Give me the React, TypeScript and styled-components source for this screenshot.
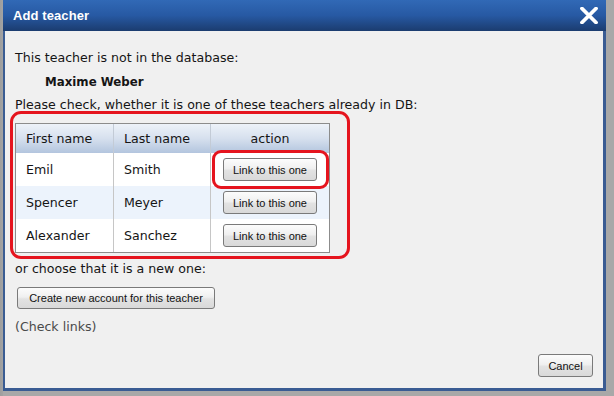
import React from 'react';
import styled, { createGlobalStyle } from 'styled-components';

const GlobalStyle = createGlobalStyle`
html, body {
  margin: 0;
  padding: 0;
  background: #a8a8a8;
  overflow: hidden;
}
body {
  font-family: "DejaVu Sans", Verdana, sans-serif;
}
`;

const Page = styled.div`
  width: 614px;
  height: 396px;
  display: flex;
  background: linear-gradient(to right, #9e9e9e 0, #a3a3a3 3px, #a8a8a8 3px);
`;

const Dialog = styled.div`
  margin-left: 3px;
  width: 603px;
  height: 391px;
  box-sizing: border-box;
  border: 3px solid #3a5c93;
  border-top: 0;
  border-left-width: 2px;
  background: #f0f0f0;
  display: flex;
  flex-direction: column;
`;

const TitleBar = styled.div`
  height: 31px;
  margin: 0 -3px 0 -2px;
  padding: 0 8px 0 10px;
  background: linear-gradient(#3169b6, #2759a3 50%, #1b3c6f);
  display: flex;
  align-items: center;
  justify-content: space-between;
`;

const Title = styled.h1`
  margin: 0;
  font-family: "Liberation Sans", Arial, sans-serif;
  font-size: 13px;
  font-weight: bold;
  color: #fff;
  letter-spacing: 0.1px;
`;

const CloseButton = styled.button`
  width: 18px;
  height: 17px;
  padding: 0;
  border: 0;
  background: none;
  display: block;
  svg { display: block; }
`;

const Body = styled.div`
  flex: 1;
  padding: 19px 10px 0 10px;
  font-size: 12.6px;
  line-height: 16px;
  color: #151515;
`;

const Line = styled.p<{ $top?: number; $indent?: number }>`
  margin: ${p => p.$top ?? 0}px 0 0 ${p => p.$indent ?? 0}px;
`;

const Name = styled(Line)`
  font-weight: bold;
  font-size: 11.8px;
`;

const Note = styled(Line)`
  color: #4a4a4a;
`;

const TableArea = styled.div`
  position: relative;
  margin-top: 10px;
  width: 315px;
`;

const Highlight = styled.div<{ $left: number; $top: number; $w: number; $h: number; $radius: number }>`
  position: absolute;
  left: ${p => p.$left}px;
  top: ${p => p.$top}px;
  width: ${p => p.$w}px;
  height: ${p => p.$h}px;
  box-sizing: border-box;
  border: 3px solid #e5141e;
  border-radius: ${p => p.$radius}px;
  pointer-events: none;
`;

const Table = styled.table`
  width: 315px;
  table-layout: fixed;
  border-collapse: separate;
  border-spacing: 0;
  border: 1px solid #8c8c8c;
  background: #fff;
  font-size: 12.6px;
  color: #151515;
`;

const Th = styled.th<{ $w: number; $center?: boolean }>`
  box-sizing: border-box;
  width: ${p => p.$w}px;
  height: 29px;
  padding: 0 0 0 ${p => (p.$center ? 0 : 10)}px;
  text-align: ${p => (p.$center ? 'center' : 'left')};
  font-weight: normal;
  background: linear-gradient(#edf2f9, #d6e0ee 50%, #b3c5de);
  & + & { border-left: 1px solid #c3cbd6; }
`;

const Row = styled.tr<{ $alt?: boolean }>`
  background: ${p => (p.$alt ? '#ecf3fc' : '#fff')};
`;

const Td = styled.td<{ $center?: boolean }>`
  box-sizing: border-box;
  height: 33px;
  padding: 0 0 0 ${p => (p.$center ? 0 : 10)}px;
  text-align: ${p => (p.$center ? 'center' : 'left')};
  vertical-align: middle;
  & + & { border-left: 1px solid #c6c6c6; }
`;

const Button = styled.button<{ $w: number }>`
  box-sizing: border-box;
  width: ${p => p.$w}px;
  height: 23px;
  padding: 0;
  font-family: "Liberation Sans", Arial, sans-serif;
  font-size: 11px;
  color: #111;
  background: linear-gradient(#fcfcfc, #f0f0f0 45%, #e2e2e2 55%, #d9d9d9);
  border: 1px solid #7a7a7a;
  border-radius: 3px;
  vertical-align: middle;
`;

const CreateButton = styled(Button)`
  display: block;
  margin: 10px 0 0 2px;
  height: 22px;
`;

const Footer = styled.div`
  display: flex;
  justify-content: flex-end;
  padding: 0 10px 11px 0;
`;

const teachers = [
  { first: 'Emil', last: 'Smith' },
  { first: 'Spencer', last: 'Meyer' },
  { first: 'Alexander', last: 'Sanchez' },
];

function AddTeacher() {
  return (
    <Page>
      <GlobalStyle />
      <Dialog>
        <TitleBar>
          <Title>Add teacher</Title>
          <CloseButton aria-label="Close">
            <svg width="18" height="17" viewBox="0 0 18 17">
              <path d="M2 1.5 L16 15.5 M16 1.5 L2 15.5" stroke="#fff" strokeWidth="3.8" strokeLinecap="round" />
            </svg>
          </CloseButton>
        </TitleBar>

        <Body>
          <Line>This teacher is not in the database:</Line>
          <Name $top={8} $indent={30}>Maxime Weber</Name>
          <Line $top={7}>Please check, whether it is one of these teachers already in DB:</Line>

          <TableArea>
            <Table>
              <thead>
                <tr>
                  <Th $w={97}>First name</Th>
                  <Th $w={97}>Last name</Th>
                  <Th $w={119} $center>action</Th>
                </tr>
              </thead>
              <tbody>
                {teachers.map((t, i) => (
                  <Row key={t.last} $alt={i === 1}>
                    <Td>{t.first}</Td>
                    <Td>{t.last}</Td>
                    <Td $center>
                      <Button $w={94}>Link to this one</Button>
                    </Td>
                  </Row>
                ))}
              </tbody>
            </Table>
            <Highlight $left={-5} $top={-12} $w={340} $h={148} $radius={11} />
            <Highlight $left={197} $top={27} $w={117} $h={39} $radius={9} />
          </TableArea>

          <Line $top={8}>or choose that it is a new one:</Line>
          <CreateButton $w={198}>Create new account for this teacher</CreateButton>
          <Note $top={10}>(Check links)</Note>
        </Body>

        <Footer>
          <Button $w={55}>Cancel</Button>
        </Footer>
      </Dialog>
    </Page>
  );
}

export default AddTeacher;
